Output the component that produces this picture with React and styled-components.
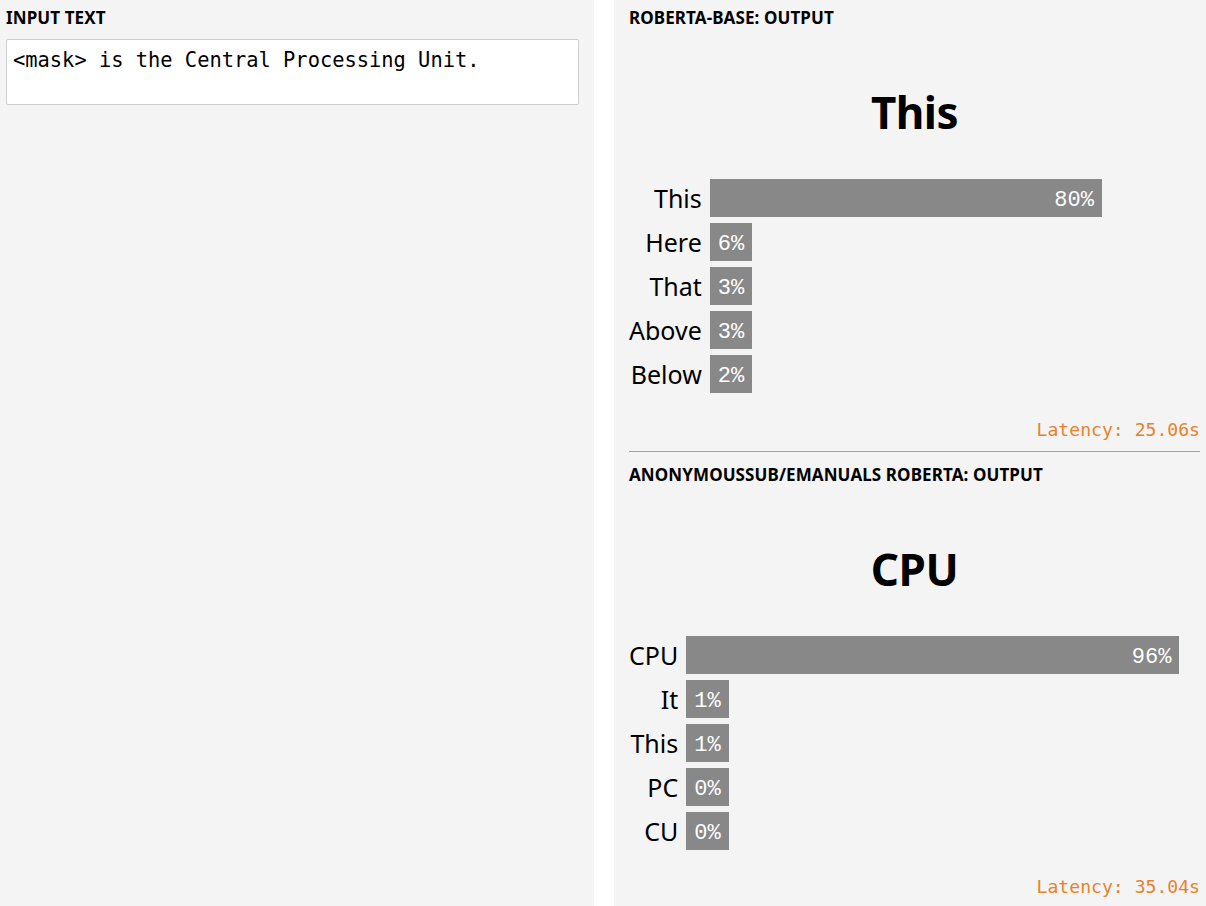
import React from "react";
import styled, { createGlobalStyle } from "styled-components";

const GlobalStyle = createGlobalStyle`
  html, body {
    margin: 0;
    padding: 0;
    background: #ffffff;
  }
  body {
    font-family: "Noto Sans", "Open Sans", sans-serif;
    color: #000000;
  }
`;

const outputs = [
  {
    model: "ROBERTA-BASE: OUTPUT",
    top: "This",
    latency: "25.06s",
    rows: [
      { label: "This", pct: 80 },
      { label: "Here", pct: 6 },
      { label: "That", pct: 3 },
      { label: "Above", pct: 3 },
      { label: "Below", pct: 2 },
    ],
  },
  {
    model: "ANONYMOUSSUB/EMANUALS ROBERTA: OUTPUT",
    top: "CPU",
    latency: "35.04s",
    rows: [
      { label: "CPU", pct: 96 },
      { label: "It", pct: 1 },
      { label: "This", pct: 1 },
      { label: "PC", pct: 0 },
      { label: "CU", pct: 0 },
    ],
  },
];

const Page = styled.div`
  display: grid;
  grid-template-columns: 594fr 592fr;
  column-gap: 20px;
  min-height: 100vh;
`;

const Panel = styled.div`
  background: #f4f4f4;
  padding: ${(p) => (p.$right ? "6px 6px 6px 15px" : "6px 15px 6px 6px")};
  box-sizing: border-box;
  min-width: 0;
`;

const Heading = styled.div`
  font-size: 17px;
  font-weight: 700;
  line-height: 24px;
  letter-spacing: 0.1px;
`;

const InputBox = styled.div`
  margin-top: 9px;
  height: 66px;
  box-sizing: border-box;
  background: #ffffff;
  border: 1px solid #d0d0d0;
  border-radius: 2px;
  padding: 8px 6px;
  font-family: "DejaVu Sans Mono", "Liberation Mono", monospace;
  font-size: 20.4px;
  line-height: 24px;
`;

const Section = styled.section`
  display: flex;
  flex-direction: column;
`;

const TopWord = styled.div`
  margin-top: 52px;
  text-align: center;
  font-size: 44px;
  font-weight: 700;
  line-height: 60px;
  letter-spacing: -0.5px;
`;

const Chart = styled.div`
  margin-top: 37px;
  display: grid;
  grid-template-columns: max-content 1fr;
  column-gap: 8px;
  row-gap: 6px;
`;

const Label = styled.div`
  text-align: right;
  font-size: 25px;
  line-height: 39px;
  height: 38px;
`;

const Bar = styled.div`
  height: 38px;
  overflow: hidden;
  min-width: max-content;
  box-sizing: border-box;
  padding: 0 8px;
  background: #888888;
  color: #ffffff;
  font-family: "Liberation Mono", "DejaVu Sans Mono", monospace;
  font-size: 22px;
  line-height: 43px;
  text-align: right;
`;

const Latency = styled.div`
  margin-top: 25px;
  text-align: right;
  font-family: "DejaVu Sans Mono", "Liberation Mono", monospace;
  font-size: 18.1px;
  line-height: 24px;
  color: #e8822a;
`;

const Divider = styled.hr`
  margin: 9px 0 11px;
  border: none;
  border-top: 1px solid #a0a0a0;
  height: 0;
`;

function Output({ data }) {
  return (
    <Section>
      <Heading>{data.model}</Heading>
      <TopWord>{data.top}</TopWord>
      <Chart>
        {data.rows.map((row, index) => (
          <React.Fragment key={index}>
            <Label>{row.label}</Label>
            <div>
              <Bar style={{ width: `${row.pct}%` }}>{row.pct}%</Bar>
            </div>
          </React.Fragment>
        ))}
      </Chart>
      <Latency>Latency: {data.latency}</Latency>
    </Section>
  );
}

export default function App() {
  return (
    <>
      <GlobalStyle />
      <Page>
        <Panel>
          <Heading>INPUT TEXT</Heading>
          <InputBox>&lt;mask&gt; is the Central Processing Unit.</InputBox>
        </Panel>
        <Panel $right>
          {outputs.map((data, index) => (
            <React.Fragment key={index}>
              {index > 0 ? <Divider /> : null}
              <Output data={data} />
            </React.Fragment>
          ))}
        </Panel>
      </Page>
    </>
  );
}
